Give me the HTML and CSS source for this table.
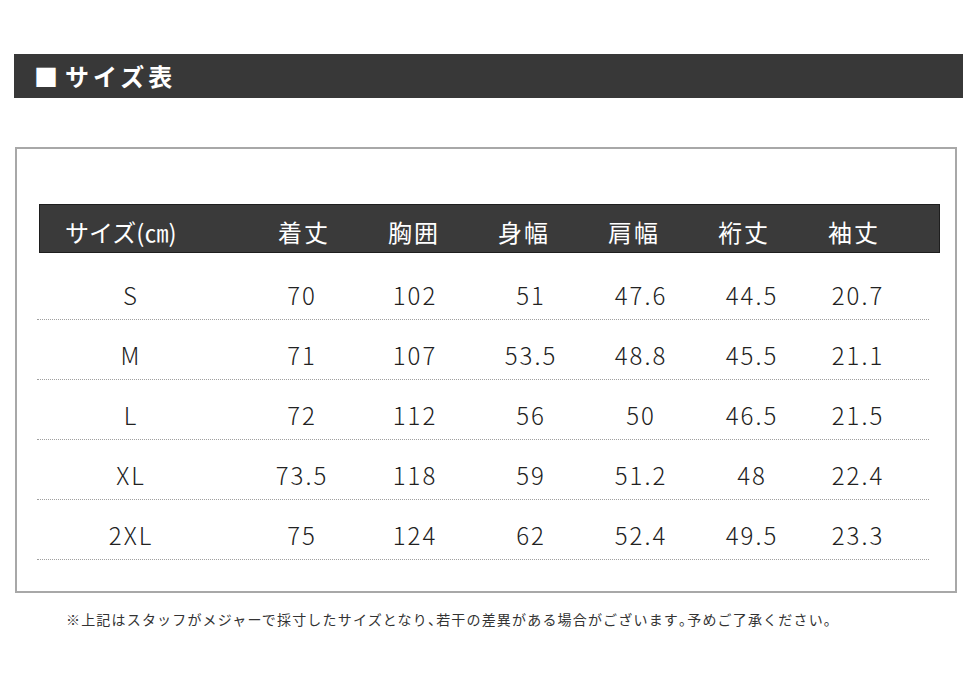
FILE: index.html
```html
<!DOCTYPE html>
<html lang="ja">
<head>
<meta charset="utf-8">
<title>サイズ表</title>
<link rel="stylesheet" href="styles.css">
</head>
<body>
<h1 class="title-bar"><span class="title-mark">■</span>サイズ表</h1>
<div class="size-box">
  <div class="table">
    <div class="thead">
      <div class="th first">サイズ(㎝)</div>
      <div class="th">着丈</div>
      <div class="th">胸囲</div>
      <div class="th">身幅</div>
      <div class="th">肩幅</div>
      <div class="th">裄丈</div>
      <div class="th">袖丈</div>
    </div>
    <div class="row first-row">
      <div class="td size">S</div><div class="td">70</div><div class="td">102</div><div class="td">51</div><div class="td">47.6</div><div class="td">44.5</div><div class="td">20.7</div>
    </div>
    <div class="row">
      <div class="td size">M</div><div class="td">71</div><div class="td">107</div><div class="td">53.5</div><div class="td">48.8</div><div class="td">45.5</div><div class="td">21.1</div>
    </div>
    <div class="row">
      <div class="td size">L</div><div class="td">72</div><div class="td">112</div><div class="td">56</div><div class="td">50</div><div class="td">46.5</div><div class="td">21.5</div>
    </div>
    <div class="row">
      <div class="td size">XL</div><div class="td">73.5</div><div class="td">118</div><div class="td">59</div><div class="td">51.2</div><div class="td">48</div><div class="td">22.4</div>
    </div>
    <div class="row">
      <div class="td size">2XL</div><div class="td">75</div><div class="td">124</div><div class="td">62</div><div class="td">52.4</div><div class="td">49.5</div><div class="td">23.3</div>
    </div>
  </div>
</div>
<p class="note">※上記はスタッフがメジャーで採寸したサイズとなり<span class="half">、</span>若干の差異がある場合がございます<span class="half">。</span>予めご了承ください<span class="half">。</span></p>
</body>
</html>
```
FILE: styles.css
```css
html, body {
  margin: 0;
  padding: 0;
  background: #ffffff;
}
body {
  font-family: "Noto Sans CJK JP", "Noto Sans", sans-serif;
  color: #222222;
  padding-top: 54px;
}
.title-bar {
  margin: 0 0 0 14px;
  width: 949px;
  height: 44px;
  box-sizing: border-box;
  background: #383838;
  color: #ffffff;
  font-size: 24px;
  font-weight: 700;
  line-height: 44px;
  letter-spacing: 4px;
  padding-left: 20px;
}
.title-mark {
  letter-spacing: 0;
  margin-right: 7px;
}
.size-box {
  margin: 49px 0 0 15px;
  width: 942px;
  height: 446px;
  box-sizing: border-box;
  border: 2px solid #a8a8a8;
  padding: 55px 0 0 22px;
}
.thead {
  display: grid;
  grid-template-columns: 208px repeat(6, 110px);
  width: 901px;
  height: 49px;
  box-sizing: border-box;
  background: #3a3a3a;
  border: 1px solid #1e1e1e;
  color: #ffffff;
  align-items: center;
}
.th {
  font-size: 24px;
  line-height: 30px;
  text-align: center;
  letter-spacing: 2px;
  padding-top: 6px;
  padding-left: 2px;
}
.th.first {
  text-align: left;
  padding-left: 25px;
  letter-spacing: 0;
}
.row {
  display: grid;
  grid-template-columns: 208px 112px 114px 118px 102px 120px 92px;
  width: 892px;
  margin-left: -2px;
  height: 60px;
  box-sizing: border-box;
  border-bottom: 1px dotted #a0a0a0;
  align-items: end;
  padding-bottom: 9px;
}
.row.first-row {
  height: 67px;
}
.td {
  font-size: 24px;
  font-weight: 300;
  line-height: 30px;
  text-align: center;
  letter-spacing: 2px;
  padding-left: 2px;
  color: #222222;
}
.td.size {
  padding-right: 22px;
}
.note {
  margin: 16px 0 0 66px;
  font-size: 14px;
  line-height: 20px;
  letter-spacing: 1.18px;
  color: #333333;
}
.half {
  font-feature-settings: "halt";
}
```
